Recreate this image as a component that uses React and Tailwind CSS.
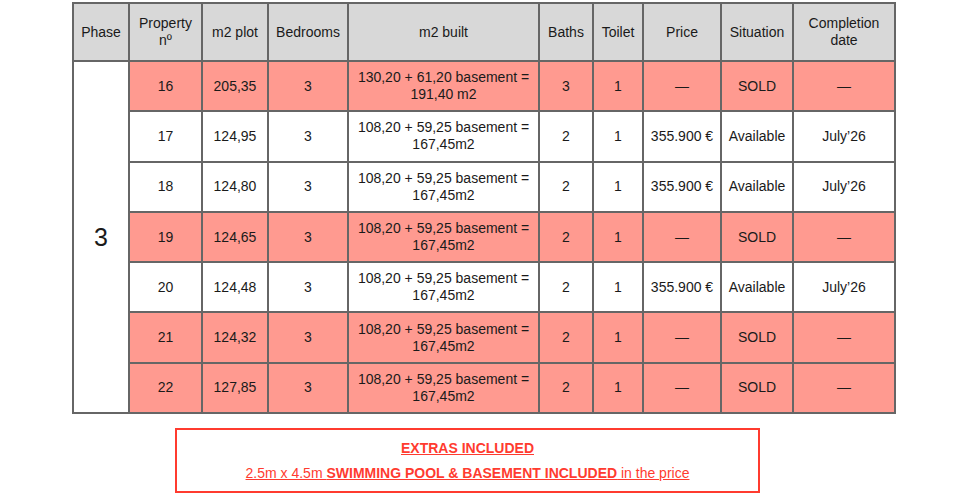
import React from "react";

const rows = [
  { n: 16, plot: "205,35", bed: 3, built: ["130,20 + 61,20 basement =", "191,40 m2"], baths: 3, toilet: 1, price: "—", sit: "SOLD", date: "—", sold: true },
  { n: 17, plot: "124,95", bed: 3, built: ["108,20 + 59,25 basement =", "167,45m2"], baths: 2, toilet: 1, price: "355.900 €", sit: "Available", date: "July’26" },
  { n: 18, plot: "124,80", bed: 3, built: ["108,20 + 59,25 basement =", "167,45m2"], baths: 2, toilet: 1, price: "355.900 €", sit: "Available", date: "July’26" },
  { n: 19, plot: "124,65", bed: 3, built: ["108,20 + 59,25 basement =", "167,45m2"], baths: 2, toilet: 1, price: "—", sit: "SOLD", date: "—", sold: true },
  { n: 20, plot: "124,48", bed: 3, built: ["108,20 + 59,25 basement =", "167,45m2"], baths: 2, toilet: 1, price: "355.900 €", sit: "Available", date: "July’26" },
  { n: 21, plot: "124,32", bed: 3, built: ["108,20 + 59,25 basement =", "167,45m2"], baths: 2, toilet: 1, price: "—", sit: "SOLD", date: "—", sold: true },
  { n: 22, plot: "127,85", bed: 3, built: ["108,20 + 59,25 basement =", "167,45m2"], baths: 2, toilet: 1, price: "—", sit: "SOLD", date: "—", sold: true },
];

const widths = [56, 73, 66, 80, 191, 54, 50, 78, 72, 102];

const th = "border-2 border-[#666] bg-[#d8d8d8] font-normal px-1 leading-[17px]";
const td = "border-2 border-[#666] px-1 leading-[17px]";

export default function App() {
  return (
    <div className="min-h-screen bg-white pt-[2px] text-[14px] text-[#1a1a1a]" style={{ fontFamily: '"Liberation Sans", Arial, sans-serif' }}>
      <table className="ml-[72px] table-fixed border-collapse text-center w-[824px]">
        <colgroup>
          {widths.map((w, i) => (
            <col key={i} style={{ width: w }} />
          ))}
        </colgroup>
        <thead>
          <tr className="h-[58px]">
            <th className={th}>Phase</th>
            <th className={th}>Property<br />nº</th>
            <th className={th}>m2 plot</th>
            <th className={th}>Bedrooms</th>
            <th className={th}>m2 built</th>
            <th className={th}>Baths</th>
            <th className={th}>Toilet</th>
            <th className={th}>Price</th>
            <th className={th}>Situation</th>
            <th className={th}>Completion<br />date</th>
          </tr>
        </thead>
        <tbody>
          {rows.map((r, i) => {
            const bg = r.sold ? "bg-[#ff9a90]" : "bg-white";
            return (
              <tr key={r.n} className="h-[50.3px]">
                {i === 0 && (
                  <td rowSpan={7} className={`${td} bg-white text-[25px]`}>3</td>
                )}
                <td className={`${td} ${bg}`}>{r.n}</td>
                <td className={`${td} ${bg}`}>{r.plot}</td>
                <td className={`${td} ${bg}`}>{r.bed}</td>
                <td className={`${td} ${bg}`}>{r.built[0]}<br />{r.built[1]}</td>
                <td className={`${td} ${bg}`}>{r.baths}</td>
                <td className={`${td} ${bg}`}>{r.toilet}</td>
                <td className={`${td} ${bg}`}>{r.price}</td>
                <td className={`${td} ${bg}`}>{r.sit}</td>
                <td className={`${td} ${bg}`}>{r.date}</td>
              </tr>
            );
          })}
        </tbody>
      </table>

      <div className="ml-[175px] mt-[14px] w-[585px] h-[65px] border-2 border-[#ff3b2f] flex flex-col items-center justify-center gap-[8px] text-[#ff3b2f] text-[14px] leading-[17px] underline">
        <div className="font-bold">EXTRAS INCLUDED</div>
        <div>
          2.5m x 4.5m <span className="font-bold">SWIMMING POOL &amp; BASEMENT INCLUDED</span> in the price
        </div>
      </div>
    </div>
  );
}
